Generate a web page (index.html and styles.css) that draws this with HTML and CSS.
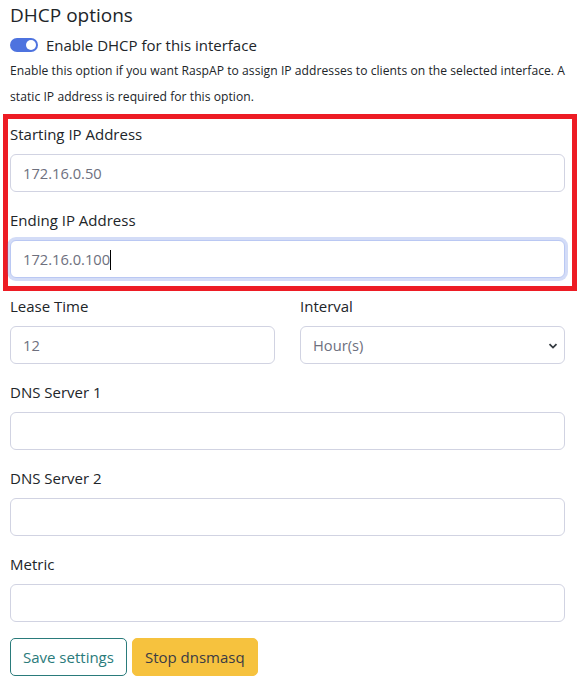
FILE: index.html
```html
<!DOCTYPE html>
<html>
<head>
<meta charset="utf-8">
<link rel="stylesheet" href="styles.css">
</head>
<body>
<div class="page">
  <h5 class="title">DHCP options</h5>
  <div class="switch-row">
    <span class="switch"><span class="knob"></span></span>
    <span class="switch-label">Enable DHCP for this interface</span>
  </div>
  <p class="help">Enable this option if you want RaspAP to assign IP addresses to clients on the selected interface. A static IP address is required for this option.</p>

  <div class="highlight">
    <div class="group">
      <label class="lbl">Starting IP Address</label>
      <div class="input">172.16.0.50</div>
    </div>
    <div class="group last">
      <label class="lbl">Ending IP Address</label>
      <div class="input focus">172.16.0.100<span class="caret"></span></div>
    </div>
  </div>

  <div class="row">
    <div class="group">
      <label class="lbl">Lease Time</label>
      <div class="input">12</div>
    </div>
    <div class="group">
      <label class="lbl">Interval</label>
      <div class="input select">Hour(s)
        <svg class="chev" width="10" height="8" viewBox="0 0 10 8"><path d="M1.5 2.2 L5 5.6 L8.5 2.2" fill="none" stroke="#343a40" stroke-width="1.8"/></svg>
      </div>
    </div>
  </div>

  <div class="group">
    <label class="lbl">DNS Server 1</label>
    <div class="input"></div>
  </div>
  <div class="group">
    <label class="lbl">DNS Server 2</label>
    <div class="input"></div>
  </div>
  <div class="group">
    <label class="lbl">Metric</label>
    <div class="input"></div>
  </div>

  <div class="buttons">
    <button class="btn btn-outline">Save settings</button>
    <button class="btn btn-warning">Stop dnsmasq</button>
  </div>
</div>
</body>
</html>
```
FILE: styles.css
```css
* { box-sizing: border-box; }
html, body { margin: 0; padding: 0; background: #fff; }
body {
  font-family: "Open Sans", "Noto Sans", sans-serif;
  color: #212529;
}
.page {
  width: 582px;
  padding: 3px 17px 0 10px;
}
.title {
  margin: 0;
  font-size: 19px;
  font-weight: 400;
  line-height: 24px;
  color: #212529;
}
.switch-row {
  display: flex;
  align-items: center;
  margin-top: 7px;
  height: 22px;
}
.switch {
  width: 28px;
  height: 14px;
  border-radius: 7px;
  background: #4e73df;
  position: relative;
  flex: none;
}
.knob {
  position: absolute;
  right: 2px;
  top: 2px;
  width: 10px;
  height: 10px;
  border-radius: 50%;
  background: #fff;
}
.switch-label {
  margin-left: 8px;
  font-size: 15px;
  line-height: 22px;
  color: #212529;
}
.help {
  margin: 2px 0 0;
  font-size: 12.1px;
  line-height: 25.5px;
  letter-spacing: 0.05px;
  color: #212529;
}
.highlight {
  margin: 5px -12px 0 -7px;
  border: 5px solid #ed1c24;
  padding: 5px 7px 8px 2px;
}
.group { margin-bottom: 18px; }
.group.last { margin-bottom: 0; }
.lbl {
  display: block;
  font-size: 15px;
  line-height: 20px;
  margin-bottom: 10px;
  color: #212529;
}
.input {
  height: 38px;
  border: 1px solid #d1d3e2;
  border-radius: 6px;
  padding: 0 12px;
  font-size: 14.7px;
  line-height: 36px;
  color: #6e707e;
  background: #fff;
  position: relative;
}
.input.focus {
  border-color: #bac8f3;
  box-shadow: 0 0 0 3px rgba(78, 115, 223, 0.25);
}
.caret {
  display: inline-block;
  width: 1px;
  height: 20px;
  background: #000;
  vertical-align: middle;
  margin-top: -3px;
}
.highlight + .row { margin-top: 5px; }
.row {
  display: grid;
  grid-template-columns: 1fr 1fr;
  column-gap: 25px;
}
.select .chev {
  position: absolute;
  right: 6px;
  top: 15px;
}
.buttons {
  display: flex;
  gap: 5px;
  margin-top: -2px;
}
.btn {
  height: 38px;
  border-radius: 5px;
  font-family: inherit;
  font-size: 15px;
  padding: 0 12px;
  cursor: pointer;
}
.btn-outline {
  background: #fff;
  border: 1px solid #2a7b7b;
  color: #2a7b7b;
}
.btn-warning {
  background: #f6c23e;
  border: 1px solid #f6c23e;
  color: #3a3b45;
}
```
